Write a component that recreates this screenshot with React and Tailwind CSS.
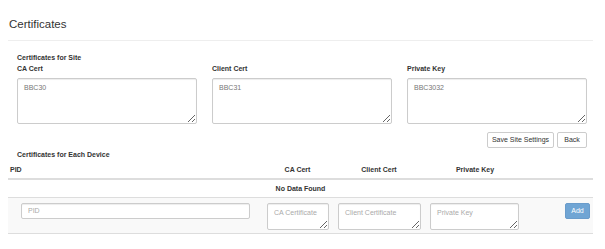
// App.jsx
// Certificates settings page: site-level certs plus a per-device table.

const boxCls =
  "block border border-[#ccc] rounded-[2px] bg-white shadow-[inset_0_1px_1px_rgba(0,0,0,0.075)] text-[7px] leading-[9px] text-[#777] placeholder:text-[#aaa] outline-none";

function SiteField({ label, value }) {
  return (
    <div>
      <div className="text-[7px] leading-[9px] font-bold">{label}</div>
      <textarea
        readOnly
        defaultValue={value}
        className={`${boxCls} mt-[5px] w-full h-[46px] px-[6px] py-[4px]`}
      />
    </div>
  );
}

export default function App() {
  return (
    <div className="font-['Liberation_Sans',Arial,sans-serif] text-[#333] bg-white w-[605px] h-[249px] pl-[8px] pr-[12px]">
      <h1 className="pt-[17px] text-[11.5px] leading-[14px] pl-[1px]">Certificates</h1>
      <div className="mt-[9px] border-t border-[#eee]" />

      <div className="pl-[9px] pr-[6px]">
        <div className="mt-[12px] text-[7px] leading-[9px] font-bold">Certificates for Site</div>
        <div className="mt-[2px] grid grid-cols-3 gap-[15px]">
          <SiteField label="CA Cert" value="BBC30" />
          <SiteField label="Client Cert" value="BBC31" />
          <SiteField label="Private Key" value="BBC3032" />
        </div>

        <div className="mt-[8px] flex justify-end gap-[3px]">
          <button className="h-[16px] w-[67px] border border-[#ccc] rounded-[2px] bg-white text-[7px] text-[#333]">
            Save Site Settings
          </button>
          <button className="h-[16px] w-[30px] border border-[#ccc] rounded-[2px] bg-white text-[7px] text-[#333]">
            Back
          </button>
        </div>

        <div className="mt-[2px] text-[7px] leading-[9px] font-bold">Certificates for Each Device</div>
      </div>

      <table className="w-[585px] border-collapse table-fixed text-[7px] leading-[9px]">
        <colgroup>
          <col className="w-[254px]" />
          <col className="w-[71px]" />
          <col className="w-[92px]" />
          <col className="w-[100px]" />
          <col className="w-[68px]" />
        </colgroup>
        <thead>
          <tr className="border-b-2 border-[#ddd]">
            <th className="h-[20px] align-bottom pb-[4px] pl-[2px] text-left font-bold">PID</th>
            <th className="h-[20px] align-bottom pb-[4px] text-center font-bold">CA Cert</th>
            <th className="h-[20px] align-bottom pb-[4px] text-center font-bold">Client Cert</th>
            <th className="h-[20px] align-bottom pb-[4px] text-center font-bold">Private Key</th>
            <th className="h-[20px]" />
          </tr>
        </thead>
        <tbody>
          <tr>
            <td colSpan={5} className="h-[18px] pt-[1px] text-center font-bold">
              No Data Found
            </td>
          </tr>
          <tr className="bg-[#f9f9f9] border-t border-b border-[#ddd]">
            <td className="pl-[13px] pr-[12px] pt-[5px] pb-[3px] align-top">
              <input
                placeholder="PID"
                className={`${boxCls} w-full h-[16px] px-[6px]`}
              />
            </td>
            <td className="pl-[5px] pt-[5px] pb-[3px] align-top">
              <textarea placeholder="CA Certificate" className={`${boxCls} w-[62px] h-[27px] px-[6px] py-[4px]`} />
            </td>
            <td className="pl-[5px] pt-[5px] pb-[3px] align-top">
              <textarea placeholder="Client Certificate" className={`${boxCls} w-[83px] h-[27px] px-[6px] py-[4px]`} />
            </td>
            <td className="pl-[5px] pt-[5px] pb-[3px] align-top">
              <textarea placeholder="Private Key" className={`${boxCls} w-[89px] h-[27px] px-[6px] py-[4px]`} />
            </td>
            <td className="pr-[3px] pt-[5px] pb-[3px] align-top">
              <div className="flex justify-end">
                <button className="h-[16px] w-[25px] rounded-[2px] bg-[#70a5d4] border border-[#6a9ccb] text-white text-[7px]">
                  Add
                </button>
              </div>
            </td>
          </tr>
        </tbody>
      </table>
    </div>
  );
}
